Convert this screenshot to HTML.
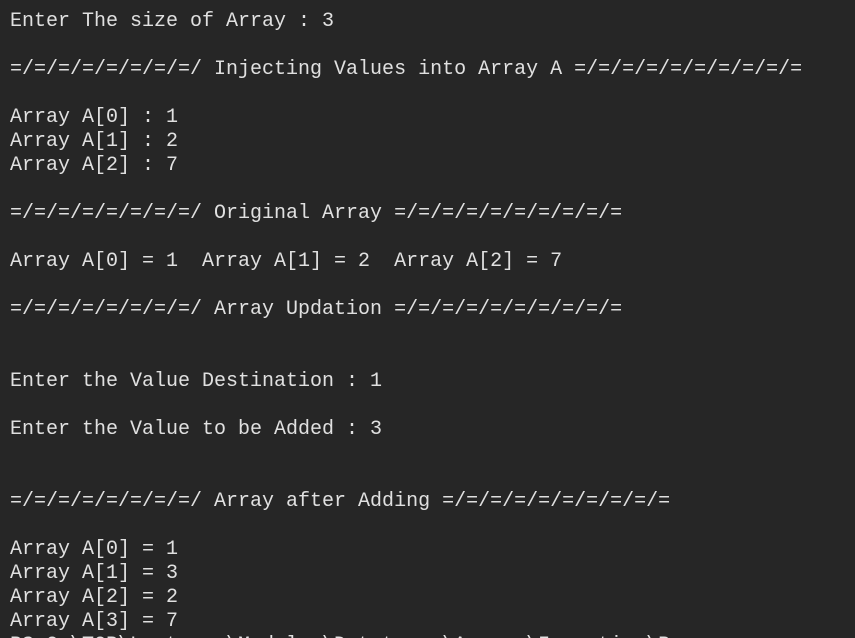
<!DOCTYPE html>
<html><head><meta charset="utf-8"><style>
html,body{margin:0;padding:0;background:#262626;width:855px;height:638px;overflow:hidden}
pre{margin:0;padding:10px 0 0 10px;font-family:"Liberation Mono",monospace;font-size:20px;line-height:24px;color:#e0e0e0;white-space:pre}
</style></head><body><pre>Enter The size of Array : 3

=/=/=/=/=/=/=/=/ Injecting Values into Array A =/=/=/=/=/=/=/=/=/=

Array A[0] : 1
Array A[1] : 2
Array A[2] : 7

=/=/=/=/=/=/=/=/ Original Array =/=/=/=/=/=/=/=/=/=

Array A[0] = 1  Array A[1] = 2  Array A[2] = 7

=/=/=/=/=/=/=/=/ Array Updation =/=/=/=/=/=/=/=/=/=


Enter the Value Destination : 1

Enter the Value to be Added : 3


=/=/=/=/=/=/=/=/ Array after Adding =/=/=/=/=/=/=/=/=/=

Array A[0] = 1
Array A[1] = 3
Array A[2] = 2
Array A[3] = 7
PS C:\TCP\Lectures\Modules\Datatypes\Arrays\Insertion\Programs&gt; 
</pre></body></html>
